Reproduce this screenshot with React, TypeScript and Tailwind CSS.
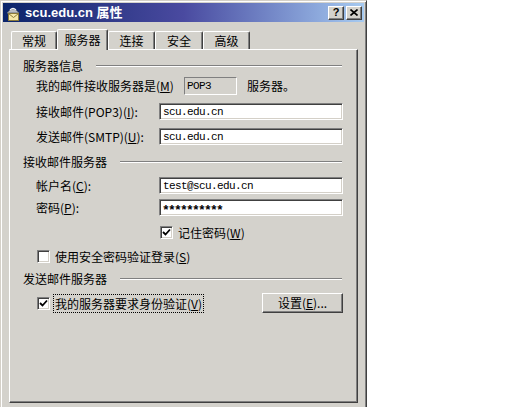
import type { ReactNode } from "react";

const CJK = "font-['Noto_Sans_CJK_SC','Noto_Sans',sans-serif]";
const MONO = "font-['Liberation_Mono',monospace]";

const sunken =
  "border border-t-[#808080] border-l-[#808080] border-b-white border-r-white shadow-[inset_1px_1px_#404040,inset_-1px_-1px_#d4d0c8]";
const raised =
  "border border-t-white border-l-white border-b-[#404040] border-r-[#404040] shadow-[inset_-1px_-1px_#808080]";

function Key({ k }: { k: string }) {
  return (
    <>
      (<span className="underline underline-offset-1">{k}</span>)
    </>
  );
}

function Section({ title }: { title: string }) {
  return (
    <div className="mt-[8px] flex h-[16px] items-center gap-[13px] pl-[13px] pr-[15px]">
      <span className="whitespace-nowrap">{title}</span>
      <div className="h-[2px] flex-1 border-t border-t-[#808080] border-b border-b-white" />
    </div>
  );
}

function Field({ label, value, top, stars }: { label: ReactNode; value: string; top: string; stars?: boolean }) {
  return (
    <div className={`flex h-[17px] items-center pl-[26px] ${top}`}>
      <span className="w-[123px] whitespace-nowrap">{label}</span>
      <div className={`flex h-[17px] w-[184px] items-center bg-white pl-[2px] text-black ${sunken}`}>
        {stars ? (
          <span className={`${MONO} translate-y-[3px] text-[13px] leading-[13px] font-bold tracking-[-1.8px]`}>{value}</span>
        ) : (
          <span className={`${MONO} pl-[1px] text-[11px] tracking-[-0.6px]`}>{value}</span>
        )}
      </div>
    </div>
  );
}

function Check({ checked }: { checked: boolean }) {
  return (
    <span className={`flex h-[13px] w-[13px] shrink-0 items-center justify-center bg-white ${sunken}`}>
      {checked && (
        <svg width="9" height="9" viewBox="0 0 9 9">
          <path d="M1 4 L3.5 6.5 L8 1.5" stroke="#000" strokeWidth="1.8" fill="none" />
        </svg>
      )}
    </span>
  );
}

function TitleIcon() {
  return (
    <svg width="16" height="16" viewBox="0 0 16 16" className="shrink-0">
      <path d="M2 8 Q8 0 14 8 Z" fill="#b8bcc4" stroke="#6b7078" strokeWidth="1" />
      <path d="M5 5 Q8 2 11 5" stroke="#eef0f4" strokeWidth="1.2" fill="none" />
      <rect x="3.5" y="8.5" width="10" height="7" fill="#f4e7a8" stroke="#8a7a3a" />
      <path d="M3.5 8.5 L8.5 12.5 L13.5 8.5" stroke="#8a7a3a" fill="none" />
    </svg>
  );
}

const tabs = [
  { label: "常规", w: "w-[46px]" },
  { label: "服务器", w: "w-[51px]", active: true },
  { label: "连接", w: "w-[47px]" },
  { label: "安全", w: "w-[48px]" },
  { label: "高级", w: "w-[47px]" },
];

export default function App() {
  return (
    <div className={`h-[407px] w-[505px] overflow-hidden bg-white text-[12px] leading-[16px] text-black ${CJK}`}>
      <div className="h-[440px] w-[367px] border border-t-[#d4d0c8] border-l-[#d4d0c8] border-r-[#404040] border-b-[#404040] bg-[#d4d2cc] p-[2px] shadow-[inset_1px_1px_white,inset_-1px_-1px_#808080]">
        {/* title bar */}
        <div className="flex h-[19px] items-center bg-gradient-to-r from-[#0a246a] via-[#4a4aa0] to-[#a6caf0] pl-[2px] pr-[2px]">
          <TitleIcon />
          <span className="ml-[4px] whitespace-nowrap font-['Liberation_Sans','Noto_Sans_CJK_SC',sans-serif] text-[13px] font-bold text-white">
            scu.edu.cn 属性
          </span>
          <div className="ml-auto flex gap-[2px]">
            <div className={`flex h-[14px] w-[16px] items-center justify-center bg-[#d4d2cc] font-['Liberation_Sans',sans-serif] text-[11px] font-bold leading-none ${raised}`}>
              ?
            </div>
            <div className={`flex h-[14px] w-[16px] items-center justify-center bg-[#d4d2cc] ${raised}`}>
              <svg width="8" height="7" viewBox="0 0 8 7">
                <path d="M0.5 0.5 L7.5 6.5 M7.5 0.5 L0.5 6.5" stroke="#000" strokeWidth="1.6" />
              </svg>
            </div>
          </div>
        </div>

        {/* tabs */}
        <div className="mt-[7px] flex h-[20px] items-end pl-[8px]">
          {tabs.map((t) =>
            t.active ? (
              <div
                key={t.label}
                className={`relative z-10 -mb-px flex h-[21px] ${t.w} items-start justify-center rounded-t-[2px] border-l border-t border-r border-l-white border-t-white border-r-[#404040] bg-[#d4d2cc] pt-[2px] shadow-[inset_-1px_0_#808080]`}
              >
                {t.label}
              </div>
            ) : (
              <div
                key={t.label}
                className={`flex h-[18px] ${t.w} items-start justify-center rounded-t-[2px] border-l border-t border-r border-l-white border-t-white border-r-[#404040] pt-[1px] shadow-[inset_-1px_0_#808080]`}
              >
                {t.label}
              </div>
            )
          )}
        </div>

        {/* panel */}
        <div className="ml-[6px] h-[354px] w-[349px] border border-t-white border-l-white border-r-[#404040] border-b-[#404040] shadow-[inset_-1px_-1px_#808080]">
          <Section title="服务器信息" />

          <div className="mt-[3px] flex h-[18px] items-center pl-[26px]">
            <span className="w-[148px] whitespace-nowrap">
              我的邮件接收服务器是<Key k="M" />
            </span>
            <div className="flex h-[18px] w-[53px] items-center border border-t-[#808080] border-l-[#808080] border-b-white border-r-white pl-[2px]">
              <span className={`${MONO} text-[11px] tracking-[-0.6px]`}>POP3</span>
            </div>
            <span className="ml-[10px]">服务器。</span>
          </div>

          <Field top="mt-[8px]" label={<>接收邮件(POP3)<Key k="I" />:</>} value="scu.edu.cn" />
          <Field top="mt-[8px]" label={<>发送邮件(SMTP)<Key k="U" />:</>} value="scu.edu.cn" />

          <div className="mt-[9px]" />
          <Section title="接收邮件服务器" />

          <Field top="mt-[7px]" label={<>帐户名<Key k="C" />:</>} value="test@scu.edu.cn" />
          <Field top="mt-[5px]" label={<>密码<Key k="P" />:</>} value="**********" stars />

          <div className="mt-[10px] flex h-[13px] items-center gap-[5px] pl-[150px]">
            <Check checked />
            <span className="whitespace-nowrap">
              记住密码<Key k="W" />
            </span>
          </div>

          <div className="mt-[11px] flex h-[13px] items-center gap-[5px] pl-[27px]">
            <Check checked={false} />
            <span className="whitespace-nowrap">
              使用安全密码验证登录<Key k="S" />
            </span>
          </div>

          <div className="mt-[2px]" />
          <Section title="发送邮件服务器" />

          <div className="mt-[6px] flex h-[20px] items-center pl-[27px] pr-[14px]">
            <Check checked />
            <span className="ml-[3px] whitespace-nowrap border border-dotted border-black px-[1px] leading-[17px]">
              我的服务器要求身份验证<Key k="V" />
            </span>
            <div className={`ml-auto flex h-[20px] w-[81px] items-center justify-center bg-[#d4d2cc] ${raised}`}>
              设置<Key k="E" />...
            </div>
          </div>
        </div>
      </div>
    </div>
  );
}
